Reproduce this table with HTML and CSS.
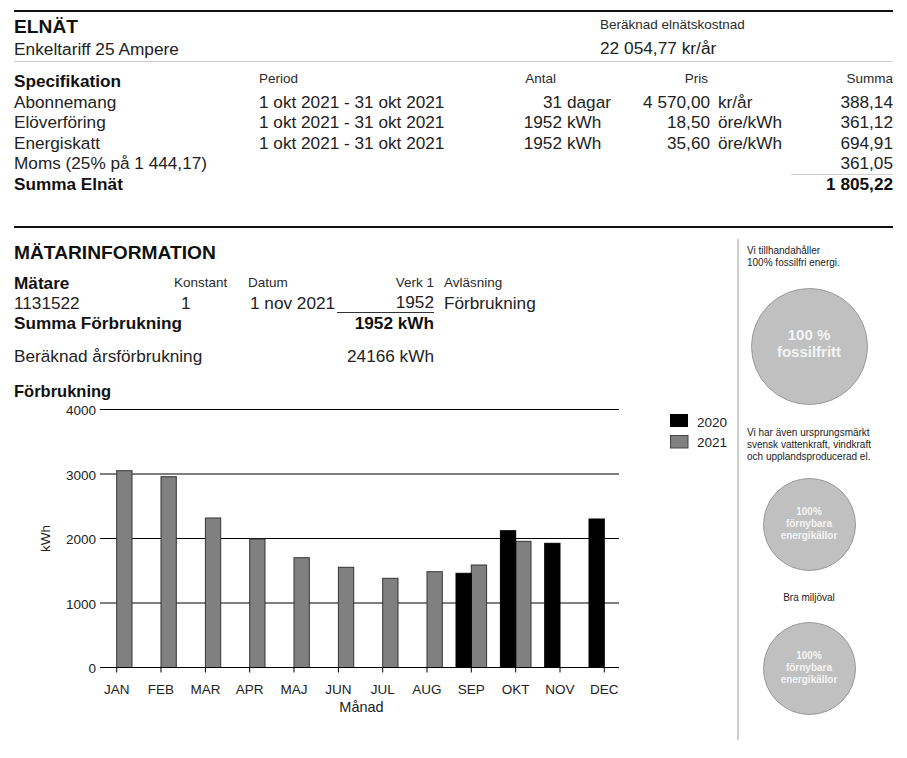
FILE: index.html
```html
<!DOCTYPE html>
<html lang="sv">
<head>
<meta charset="utf-8">
<title>Elnät</title>
<link rel="stylesheet" href="styles.css">
</head>
<body>
<div class="page">
  <section class="elnat">
    <div class="head">
      <div class="head-left">
        <h1 class="title">ELNÄT</h1>
        <div class="sub">Enkeltariff 25 Ampere</div>
      </div>
      <div class="head-right">
        <div class="label">Beräknad elnätskostnad</div>
        <div class="cost">22 054,77 kr/år</div>
      </div>
    </div>
    <div class="spec">
      <div class="th-main">Specifikation</div>
      <div class="th">Period</div>
      <div class="th r th-antal">Antal</div>
      <div class="th"></div>
      <div class="th r th-pris">Pris</div>
      <div class="th"></div>
      <div class="th r">Summa</div>

      <div>Abonnemang</div>
      <div>1 okt 2021 - 31 okt 2021</div>
      <div class="r">31</div>
      <div class="u1">dagar</div>
      <div class="r">4 570,00</div>
      <div class="u2">kr/år</div>
      <div class="r">388,14</div>

      <div>Elöverföring</div>
      <div>1 okt 2021 - 31 okt 2021</div>
      <div class="r">1952</div>
      <div class="u1">kWh</div>
      <div class="r">18,50</div>
      <div class="u2">öre/kWh</div>
      <div class="r">361,12</div>

      <div>Energiskatt</div>
      <div>1 okt 2021 - 31 okt 2021</div>
      <div class="r">1952</div>
      <div class="u1">kWh</div>
      <div class="r">35,60</div>
      <div class="u2">öre/kWh</div>
      <div class="r">694,91</div>

      <div>Moms (25% på 1 444,17)</div>
      <div></div><div></div><div></div><div></div><div></div>
      <div class="r">361,05</div>

      <div class="b">Summa Elnät</div>
      <div></div><div></div><div></div><div></div><div></div>
      <div class="r b total">1 805,22</div>
    </div>
  </section>

  <section class="matar">
    <div class="main">
      <h2 class="title">MÄTARINFORMATION</h2>
      <div class="meter">
        <div class="mh">Mätare</div>
        <div class="th">Konstant</div>
        <div class="th">Datum</div>
        <div class="th r">Verk 1</div>
        <div class="th av">Avläsning</div>

        <div>1131522</div>
        <div class="k">1</div>
        <div class="d">1 nov 2021</div>
        <div class="r verk">1952</div>
        <div class="av">Förbrukning</div>

        <div class="b span3">Summa Förbrukning</div>
        <div class="r b">1952 kWh</div>
        <div></div>
      </div>
      <div class="meter est">
        <div class="span3">Beräknad årsförbrukning</div>
        <div class="r">24166 kWh</div>
        <div></div>
      </div>
      <div class="chart-title">Förbrukning</div>
      <svg class="chart" width="723" height="331" viewBox="14 402 723 331" xmlns="http://www.w3.org/2000/svg">
        <g class="grid">
          <line x1="100" x2="619" y1="410.5" y2="410.5"/>
          <line x1="100" x2="619" y1="475" y2="475"/>
          <line x1="100" x2="619" y1="539.5" y2="539.5"/>
          <line x1="100" x2="619" y1="604" y2="604"/>
        </g>
        <g class="axt">
          <text x="96" y="416.3">4000</text>
          <text x="96" y="480.8">3000</text>
          <text x="96" y="545.3">2000</text>
          <text x="96" y="609.8">1000</text>
          <text x="96" y="674.3">0</text>
        </g>
        <g class="b21">
          <rect x="116.7" y="471.7" width="15.3" height="196.8"/>
          <rect x="161" y="477.7" width="15.3" height="190.8"/>
          <rect x="205.4" y="519" width="15.3" height="149.5"/>
          <rect x="249.7" y="540" width="15.3" height="128.5"/>
          <rect x="294" y="558.7" width="15.3" height="109.8"/>
          <rect x="338.4" y="568.3" width="15.3" height="100.2"/>
          <rect x="382.7" y="579.3" width="15.3" height="89.2"/>
          <rect x="427" y="572.7" width="15.3" height="95.8"/>
          <rect x="471.3" y="566" width="15.3" height="102.5"/>
          <rect x="515.7" y="542.3" width="15.3" height="126.2"/>
        </g>
        <g class="b20">
          <rect x="456" y="574.3" width="15.3" height="94.2"/>
          <rect x="500.4" y="531.7" width="15.3" height="136.8"/>
          <rect x="544.7" y="544.3" width="15.3" height="124.2"/>
          <rect x="589" y="520" width="15.3" height="148.5"/>
        </g>
        <g class="grid">
          <line x1="100" x2="619" y1="668.5" y2="668.5"/>
          <line x1="116.7" x2="116.7" y1="668.5" y2="673.5"/>
          <line x1="161" x2="161" y1="668.5" y2="673.5"/>
          <line x1="205.4" x2="205.4" y1="668.5" y2="673.5"/>
          <line x1="249.7" x2="249.7" y1="668.5" y2="673.5"/>
          <line x1="294" x2="294" y1="668.5" y2="673.5"/>
          <line x1="338.4" x2="338.4" y1="668.5" y2="673.5"/>
          <line x1="382.7" x2="382.7" y1="668.5" y2="673.5"/>
          <line x1="427" x2="427" y1="668.5" y2="673.5"/>
          <line x1="471.3" x2="471.3" y1="668.5" y2="673.5"/>
          <line x1="515.7" x2="515.7" y1="668.5" y2="673.5"/>
          <line x1="560" x2="560" y1="668.5" y2="673.5"/>
          <line x1="604.3" x2="604.3" y1="668.5" y2="673.5"/>
        </g>
        <g class="axm">
          <text x="116.7" y="695">JAN</text>
          <text x="161" y="695">FEB</text>
          <text x="205.4" y="695">MAR</text>
          <text x="249.7" y="695">APR</text>
          <text x="294" y="695">MAJ</text>
          <text x="338.4" y="695">JUN</text>
          <text x="382.7" y="695">JUL</text>
          <text x="427" y="695">AUG</text>
          <text x="471.3" y="695">SEP</text>
          <text x="515.7" y="695">OKT</text>
          <text x="560" y="695">NOV</text>
          <text x="604.3" y="695">DEC</text>
          <text class="xlab" x="361.5" y="713">Månad</text>
          <text transform="translate(49.5 539.5) rotate(-90)">kWh</text>
        </g>
        <g class="legend">
          <rect class="lg20" x="670" y="415" width="18" height="13"/>
          <rect class="lg21" x="670.5" y="436.5" width="17.5" height="12.5"/>
          <text x="697" y="428">2020</text>
          <text x="697" y="448">2021</text>
        </g>
      </svg>
    </div>
    <aside class="side">
      <p class="side-text">Vi tillhandahåller<br>100% fossilfri energi.</p>
      <div class="circle big">100 %<br>fossilfritt</div>
      <p class="side-text t2">Vi har även ursprungsmärkt<br>svensk vattenkraft, vindkraft<br>och upplandsproducerad el.</p>
      <div class="circle small c2">100%<br>förnybara<br>energikällor</div>
      <p class="side-text t3">Bra miljöval</p>
      <div class="circle small c3">100%<br>förnybara<br>energikällor</div>
    </aside>
  </section>
</div>
</body>
</html>
```

FILE: styles.css
```css
* {
  box-sizing: border-box;
  margin: 0;
  padding: 0;
}

body {
  margin: 0;
  background: #fff;
  color: #222;
  font-family: "Liberation Sans", Arial, sans-serif;
}

.page {
  width: 907px;
  padding: 10px 14px 0 14px;
}

/* ---------- ELNÄT ---------- */
.elnat {
  border-top: 2px solid #111;
}

.head {
  display: grid;
  grid-template-columns: 586px 1fr;
  height: 50px;
  border-bottom: 1px solid #cfcfcf;
}

.head-left {
  padding-top: 4px;
}

.title {
  font-size: 19.2px;
  line-height: 22px;
  font-weight: 700;
  color: #111;
}

.sub {
  margin-top: 1px;
  font-size: 17.3px;
  line-height: 20px;
}

.head-right {
  padding-top: 5px;
}

.label {
  font-size: 13.5px;
  line-height: 16px;
  color: #2a2a2a;
}

.cost {
  margin-top: 5px;
  font-size: 17.3px;
  line-height: 20px;
}

.spec {
  display: grid;
  grid-template-columns: 245px 203px 100px 58px 90px 81px 102px;
  grid-template-rows: 21px;
  grid-auto-rows: 20.4px;
  margin-top: 9px;
  font-size: 17.2px;
  line-height: 20.4px;
  white-space: nowrap;
}

.th-main {
  font-weight: 700;
  line-height: 21px;
  color: #111;
}

.th {
  font-size: 13.5px;
  line-height: 16px;
  align-self: start;
  color: #2a2a2a;
}

.r {
  text-align: right;
}

.th-antal {
  padding-right: 6px;
}

.th-pris {
  padding-right: 2px;
}

.u1 {
  padding-left: 5px;
}

.u2 {
  padding-left: 8px;
}

.b {
  font-weight: 700;
  color: #111;
}

.total {
  border-top: 1px solid #cfcfcf;
  line-height: 19.4px;
}

/* ---------- MÄTARINFORMATION ---------- */
.matar {
  margin-top: 32px;
  border-top: 2px solid #111;
  display: flex;
  align-items: flex-start;
}

.main {
  width: 723px;
  padding-top: 14px;
}

.meter {
  display: grid;
  grid-template-columns: 160px 74px 89px 97px 1fr;
  grid-auto-rows: 20px;
  align-items: center;
  margin-top: 9px;
  font-size: 17.2px;
  line-height: 20px;
  white-space: nowrap;
}

.meter .th {
  align-self: center;
}

.mh {
  font-weight: 700;
  color: #111;
}

.k {
  padding-left: 7px;
}

.d {
  padding-left: 2px;
}

.av {
  padding-left: 10px;
}

.verk {
  border-bottom: 1px solid #333;
}

.span3 {
  grid-column: 1 / 4;
}

.meter.est {
  margin-top: 13px;
}

.chart-title {
  margin-top: 15px;
  font-size: 16.5px;
  line-height: 20px;
  font-weight: 700;
  color: #111;
}

.chart {
  display: block;
  overflow: visible;
}

.grid line {
  stroke: #000;
  stroke-width: 1;
}

.axt text {
  font-family: "Liberation Sans", Arial, sans-serif;
  font-size: 13.5px;
  fill: #222;
  text-anchor: end;
}

.axm text {
  font-family: "Liberation Sans", Arial, sans-serif;
  font-size: 13.5px;
  fill: #222;
  text-anchor: middle;
}

.axm .xlab {
  font-size: 14.5px;
}

.b21 rect {
  fill: #808080;
  stroke: #333;
  stroke-width: 1;
}

.b20 rect {
  fill: #000;
  stroke: #000;
  stroke-width: 1;
}

.legend text {
  font-family: "Liberation Sans", Arial, sans-serif;
  font-size: 13.5px;
  fill: #222;
}

.lg20 {
  fill: #000;
}

.lg21 {
  fill: #808080;
  stroke: #444;
  stroke-width: 1;
}

/* ---------- Sidebar ---------- */
.side {
  width: 156px;
  height: 501px;
  margin-top: 11px;
  border-left: 2px solid #cfcfcf;
  padding: 6px 22px 0 8px;
  display: flex;
  flex-direction: column;
}

.side-text {
  font-size: 10px;
  line-height: 12px;
  color: #222;
  white-space: nowrap;
}

.t2 {
  margin-top: 22px;
}

.t3 {
  margin-top: 21px;
  text-align: center;
}

.circle {
  align-self: center;
  border-radius: 50%;
  background: #c0c0c0;
  border: 1px solid #999;
  display: flex;
  align-items: center;
  justify-content: center;
  text-align: center;
  color: #f4f4f4;
  font-weight: 700;
}

.big {
  width: 117px;
  height: 117px;
  margin-top: 19px;
  font-size: 15px;
  line-height: 17.5px;
  padding-bottom: 6px;
}

.small {
  width: 93px;
  height: 93px;
  font-size: 10px;
  line-height: 12px;
}

.c2 {
  margin-top: 15px;
}

.c3 {
  margin-top: 18px;
}
```
